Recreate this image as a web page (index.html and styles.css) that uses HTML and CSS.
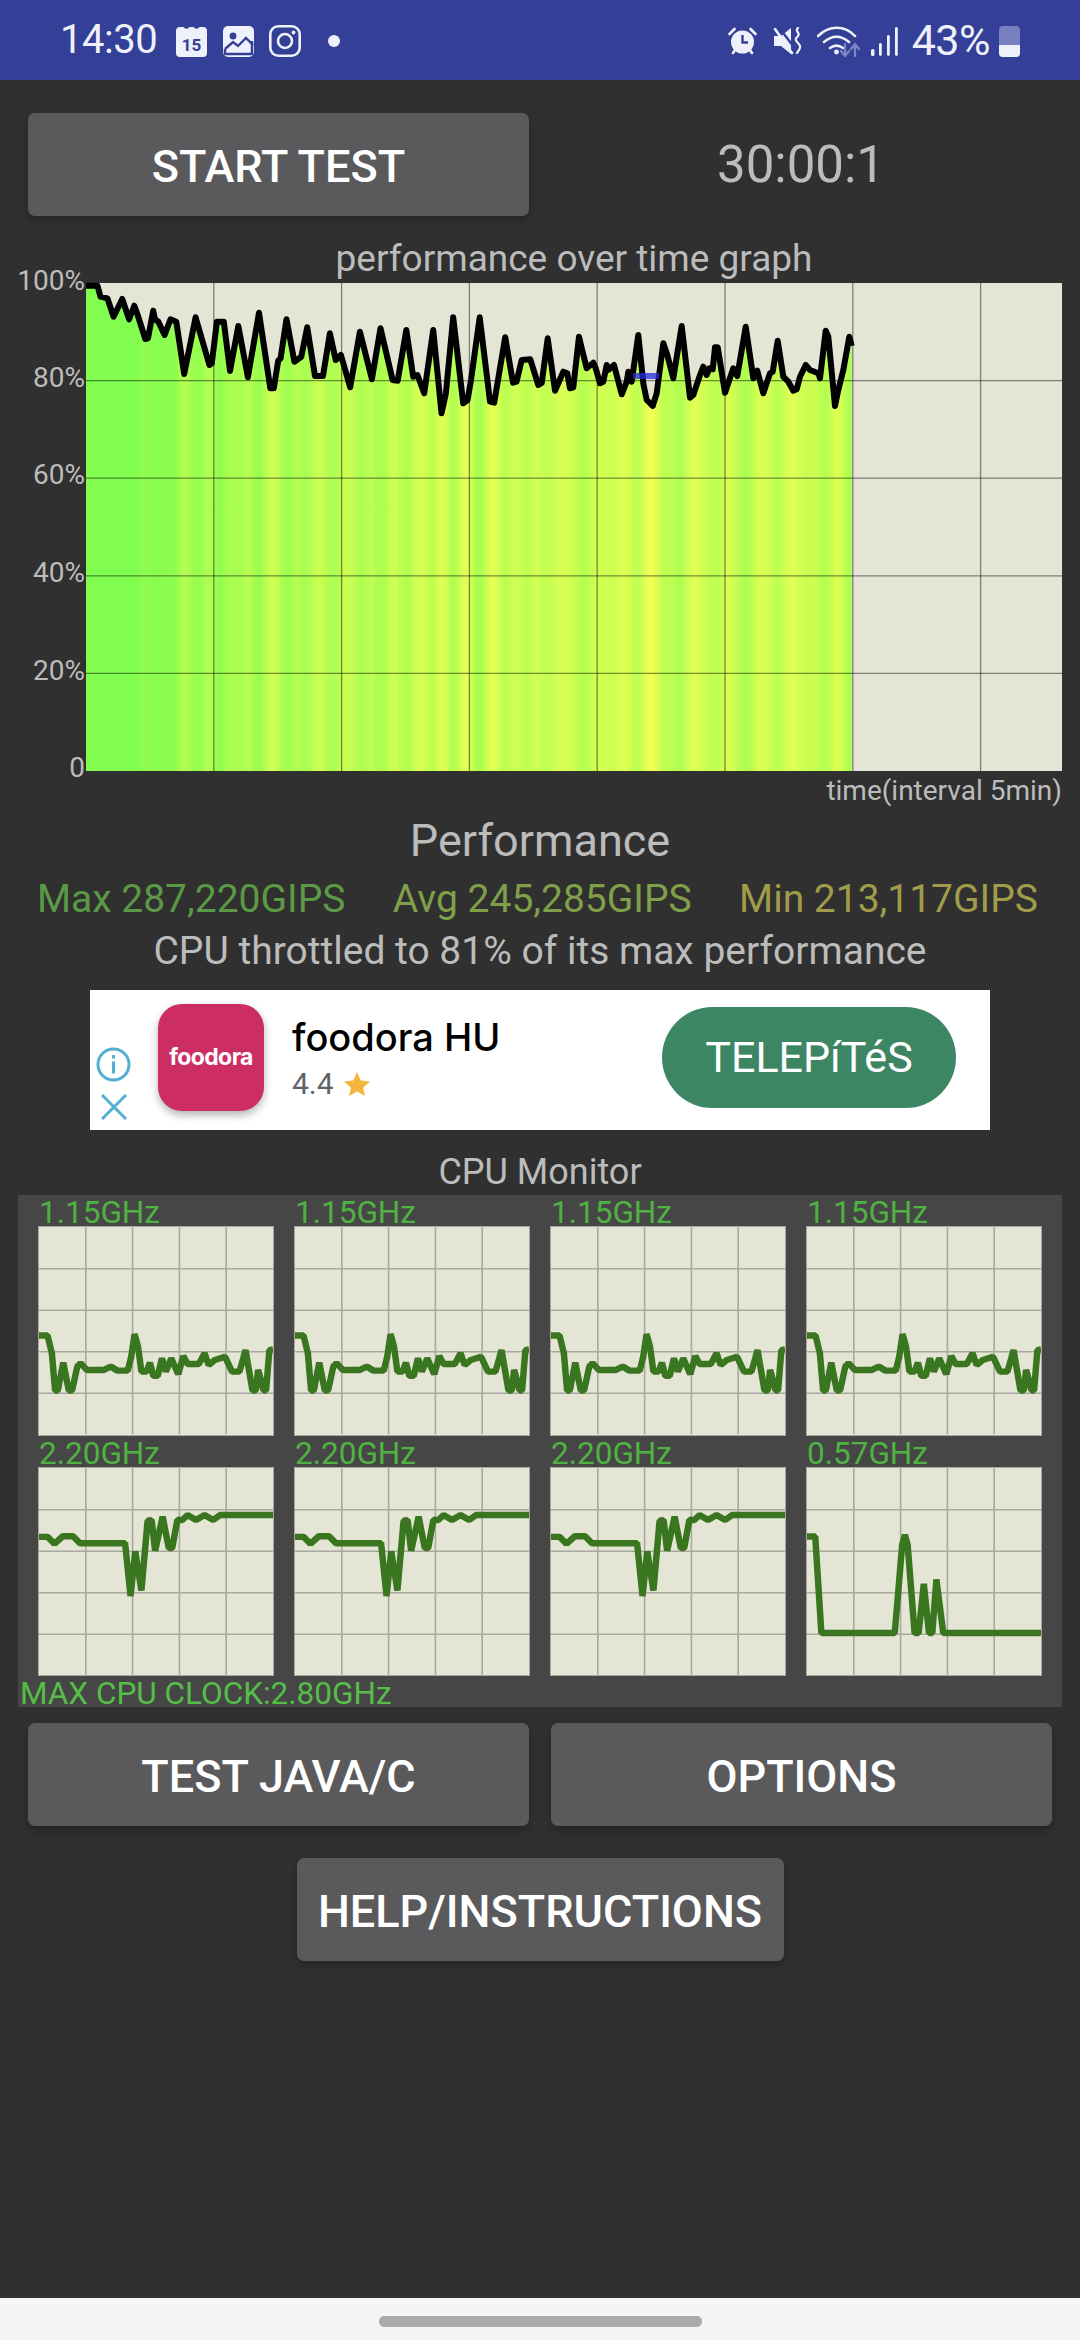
FILE: index.html
```html
<!DOCTYPE html>
<html lang="en">
<head>
<meta charset="UTF-8">
<meta name="viewport" content="width=device-width, initial-scale=1.0">
<title>CPU Throttling Test</title>
<link rel="stylesheet" href="styles.css">
</head>
<body>

<div class="status-bar">
    <span class="clock">14:30</span>
    <svg class="icon-calendar" viewBox="0 0 31 31">
        <path class="solid" d="M4 1h3.5a3.5 3.5 0 0 0 6 0h4a3.5 3.5 0 0 0 6 0H27a4 4 0 0 1 4 4v22a4 4 0 0 1-4 4H4a4 4 0 0 1-4-4V5a4 4 0 0 1 4-4z"/>
        <text class="calendar-day" x="15.5" y="25">15</text>
    </svg>
    <svg class="icon-gallery" viewBox="0 0 31 31">
        <rect class="solid" width="31" height="31" rx="5"/>
        <circle class="cut" cx="10" cy="10" r="3.4"/>
        <path class="cut-line" d="M2 23l8-7 5 4 8-8 7 7"/>
        <path class="cut-line" d="M2 23v5h27V15"/>
    </svg>
    <svg class="icon-insta" viewBox="0 0 32 32">
        <rect class="line" x="1.3" y="1.3" width="29.4" height="29.4" rx="8"/>
        <circle class="line" cx="16" cy="16" r="7"/>
        <circle class="solid" cx="24.5" cy="7.5" r="1.9"/>
    </svg>
    <span class="status-dot"></span>

    <div class="status-right">
        <svg class="icon-alarm" viewBox="0 0 29 28">
            <circle class="solid" cx="14.500" cy="15" r="11.500"/>
            <path class="cut-line thin" d="M14.500 8v7.500H20"/>
            <path class="line" d="M1.500 7l5-5M27.500 7l-5-5M5 26l2-3M24 26l-2-3"/>
        </svg>
        <svg class="icon-mute" viewBox="0 0 29 28">
            <path class="solid" d="M1 9h7l10-8v26l-10-8H1z"/>
            <path class="cut-line" d="M5-1l18 24"/>
            <path class="line" d="M2 2l17 24"/>
            <path class="line thin" d="M25 1c-4 3 3 5 0 8s-3 4 0 7 3 5-1 10"/>
        </svg>
        <svg class="icon-wifi" viewBox="0 0 44 32">
            <path class="line" d="M1 11c11-11 27-11 37 0M7 17c8-7 17-7 25 0M13 23c4-3 9-3 13 0"/>
            <circle class="solid" cx="19.500" cy="27" r="2.400"/>
            <path class="line dim" d="M28 19v12M24 26l4 5 4-5M38 31V19M34 24l4-5 4 5"/>
        </svg>
        <svg class="icon-signal" viewBox="0 0 27 29">
            <rect class="solid" y="22" width="3.500" height="7" rx="1.500"/>
            <rect class="solid" x="8" y="16" width="2.800" height="13" rx="1.400"/>
            <rect class="solid" x="16" y="8" width="2.800" height="21" rx="1.400"/>
            <rect class="solid" x="24" y="0" width="2.800" height="29" rx="1.400"/>
        </svg>
        <span class="battery-text">43%</span>
        <div class="battery"><div class="battery-level"></div></div>
    </div>
</div>

<div class="main">
    <div class="button-row top-row">
        <button type="button" class="btn">START TEST</button>
        <div class="timer">30:00:1</div>
    </div>

    <div class="graph-title">performance over time graph</div>
    <svg class="perf-chart" id="perfChart" viewBox="0 280 1080 495">
        <defs><linearGradient id="heat" gradientUnits="userSpaceOnUse" x1="86" x2="852" y1="0" y2="0"></linearGradient></defs>
        <rect class="plot-bg" x="86" y="283" width="976" height="488"/>
        <text class="axis-label" x="85" y="290">100%</text>
        <text class="axis-label" x="85" y="387">80%</text>
        <text class="axis-label" x="85" y="484">60%</text>
        <text class="axis-label" x="85" y="582">40%</text>
        <text class="axis-label" x="85" y="680">20%</text>
        <text class="axis-label" x="85" y="777">0</text>
    </svg>
    <div class="time-label">time(interval 5min)</div>

    <div class="perf-title">Performance</div>
    <div class="stats">
        <span class="stat-max">Max 287,220GIPS</span>
        <span class="stat-avg">Avg 245,285GIPS</span>
        <span class="stat-min">Min 213,117GIPS</span>
    </div>
    <div class="throttle-text">CPU throttled to 81% of its max performance</div>

    <div class="ad">
        <div class="ad-choices">
            <svg class="ad-info" viewBox="0 0 35 35">
                <circle cx="17.500" cy="17.500" r="15.500"/>
                <path d="M17.500 14.500v12M17.500 8v3.500"/>
            </svg>
            <svg class="ad-close" viewBox="0 0 26 26">
                <path d="M1 1l24 24M25 1L1 25"/>
            </svg>
        </div>
        <div class="ad-logo">foodora</div>
        <div class="ad-info-text">
            <div class="ad-name">foodora HU</div>
            <div class="ad-rating">4.4
                <svg class="ad-star" viewBox="0 0 26 24"><path d="M13 0l3.800 8.600 9.200 .9-7 6.200 2.100 8.300L13 19.500 4.900 24 7 15.700 0 9.500l9.200-.9z"/></svg>
            </div>
        </div>
        <div class="ad-button">TELEPíTéS</div>
    </div>

    <div class="monitor-title">CPU Monitor</div>
    <div class="cpu-panel">
        <div class="cpu-grid">
            <div class="cpu-cell"><div class="cpu-label">1.15GHz</div><svg class="cpu-chart" data-trace="little" viewBox="0 0 236 209"></svg></div>
            <div class="cpu-cell"><div class="cpu-label">1.15GHz</div><svg class="cpu-chart" data-trace="little" viewBox="0 0 236 209"></svg></div>
            <div class="cpu-cell"><div class="cpu-label">1.15GHz</div><svg class="cpu-chart" data-trace="little" viewBox="0 0 236 209"></svg></div>
            <div class="cpu-cell"><div class="cpu-label">1.15GHz</div><svg class="cpu-chart" data-trace="little" viewBox="0 0 236 209"></svg></div>
            <div class="cpu-cell"><div class="cpu-label">2.20GHz</div><svg class="cpu-chart" data-trace="mid" viewBox="0 0 236 209"></svg></div>
            <div class="cpu-cell"><div class="cpu-label">2.20GHz</div><svg class="cpu-chart" data-trace="mid" viewBox="0 0 236 209"></svg></div>
            <div class="cpu-cell"><div class="cpu-label">2.20GHz</div><svg class="cpu-chart" data-trace="mid" viewBox="0 0 236 209"></svg></div>
            <div class="cpu-cell"><div class="cpu-label">0.57GHz</div><svg class="cpu-chart" data-trace="big" viewBox="0 0 236 209"></svg></div>
        </div>
        <div class="cpu-label max-clock">MAX CPU CLOCK:2.80GHz</div>
    </div>

    <div class="button-row">
        <button type="button" class="btn">TEST JAVA/C</button>
        <button type="button" class="btn">OPTIONS</button>
    </div>
    <button type="button" class="btn help-btn">HELP/INSTRUCTIONS</button>
</div>

<div class="nav-bar"><div class="nav-pill"></div></div>

<script>
const SVG_NS = 'http://www.w3.org/2000/svg';

// x,y pairs read off the run, in page pixels
const perfData = [86,285.7, 97.5,285.7, 100.5,296.7, 107.4,298.3, 113.6,316.7, 122.2,299, 129.1,319.3, 134.3,305.7, 137.7,315,
    145.3,339, 148,338.3, 153.2,310.7, 155,319.3, 158.4,321.7, 164.6,335, 170.5,319.3, 176.3,321.7, 184.2,374, 195.6,317.3,
    209.4,365, 211.8,363.3, 216.9,321.7, 223.8,321.7, 230,371, 238.3,326, 247.9,377.3, 259,312.7, 270.3,388.3, 273.8,388.3,
    278.2,360.7, 280.6,358.3, 286.5,319.3, 294.4,361.7, 301.3,356.7, 307.2,327.3, 315,376, 323,376, 329.9,333.3, 335.7,360,
    340.9,355, 350.2,387.3, 359.9,331.7, 371.9,379.3, 380.5,328.3, 392.6,380, 397.7,380.7, 406.3,330, 413.2,376.7, 417.4,375,
    424.2,393.3, 433.2,330, 441.5,413.3, 445.9,393.3, 453.2,317.3, 463.2,403.3, 467.6,400, 471,380, 479.7,317.3, 490,401.7,
    494.2,402.7, 505.2,337.3, 513,382.7, 516.5,381.7, 521.7,360, 530.3,359.3, 538.3,385, 541.7,383, 547.7,338.3, 555,390.7,
    563.3,371.7, 567.3,373.3, 570,388.3, 573.3,387.3, 579,336.7, 581.7,348.3, 586.7,368.3, 593.3,362.7, 595.7,368.3, 600,383.3,
    603.3,381.7, 606.7,365, 608.3,370, 614,365, 621.7,394.3, 626.7,381.7, 628.3,371.7, 631.7,381.7, 638.3,335, 643.3,383.3,
    646.7,400, 652.7,406, 656.7,393.3, 663.3,343.3, 667.3,355, 673.3,378.3, 681.7,326, 690,397.7, 693.3,395, 700,375, 703.3,366.7,
    706.7,375, 709.3,368.3, 712.7,369.3, 715,347.3, 717.7,347.3, 725,392.7, 733.3,368.3, 737.3,376, 745.7,326.7, 753.3,378.3,
    757.3,370.7, 763.3,393.3, 770,373.3, 772.7,371.7, 777.7,340.7, 783.3,376.7, 788.3,381.7, 793.3,390.7, 796.7,389.3, 800,376.7,
    805.7,365, 810,370, 818.3,373.3, 820,378.3, 825.7,330.7, 828.3,336.7, 835,406, 838.3,390, 843.3,370, 849.3,336.7, 851.7,346];

const cpuTraces = {
    little: [0,109.3, 8.6,109.3, 13,127.3, 16.2,164.7, 19,164.7, 24.5,136.7, 30,164.7, 33.4,164.7, 38.6,140.7, 42,137.3, 48.2,144,
        65.4,144, 72.3,140.7, 79.2,144.7, 89.5,144.7, 93,130.7, 96.4,108, 99.9,120.7, 103.3,145.7, 108.5,145.7, 111.9,136.7,
        115.3,150, 119.8,150, 124,132.3, 128,145.7, 133.3,132.3, 140.5,148.3, 145.6,130, 149.8,138, 161.2,138, 167,127.3, 171.1,139,
        177.3,134, 187.6,130.7, 194.6,145.7, 202.2,145.7, 208.3,124, 215.3,164.7, 218.7,164.7, 221,144, 226.6,164.7, 229,164.7,
        232.4,124, 236,123.3],
    mid: [0,69.3, 8.6,69.3, 15.5,76.3, 24,68.7, 34.4,68.7, 41.3,75.7, 86.8,75.7, 92.3,129, 97.1,84, 103.3,123.3, 109.5,53.3, 113.6,52.3,
        117.1,83.3, 124.7,49, 130.9,80.7, 134.3,80.7, 139.5,52.3, 144.6,52.3, 149.8,47.3, 158.4,52.3, 167,47.3, 175.6,52.3, 182.5,47.3, 236,47.3],
    big: [0,69, 8.3,69, 14.5,166.3, 88.5,166.3, 96,77.3, 98.8,67.3, 101.5,77.3, 108.5,166.3, 112.6,166.3, 117.8,116.7, 123,166.3,
        126.4,166.3, 130.5,112.3, 137.4,166.3, 236,166.3]
};

function addShape(parent, tag, cls, attrs) {
    let el = document.createElementNS(SVG_NS, tag);
    el.setAttribute('class', cls);
    for (let key in attrs) {
        el.setAttribute(key, attrs[key]);
    }
    parent.appendChild(el);
    return el;
}

function toPoints(data) {
    let points = [];
    for (let i = 0; i < data.length; i += 2) {
        points.push(data[i] + ',' + data[i + 1]);
    }
    return points.join(' ');
}

function perfYAt(x) {
    for (let i = 2; i < perfData.length; i += 2) {
        if (perfData[i] >= x) {
            let t = (x - perfData[i - 2]) / (perfData[i] - perfData[i - 2]);
            return perfData[i - 1] + t * (perfData[i + 1] - perfData[i - 1]);
        }
    }
    return perfData[perfData.length - 1];
}

function drawPerfChart() {
    let chart = document.getElementById('perfChart');
    let heat = document.getElementById('heat');

    // low score = yellow, high score = green; averaged so the bands blur into each other
    for (let x = 86; x <= 852; x += 5) {
        let sum = 0;
        for (let d = -6; d <= 6; d += 2) {
            sum += perfYAt(Math.max(86, Math.min(851, x + d)));
        }
        let t = Math.max(0, Math.min(1, (sum / 7 - 318) / 85));
        let color = 'rgb(' + Math.round(128 + 122 * t) + ',' + Math.round(253 + 2 * t) + ',' + Math.round(78 + 7 * t) + ')';
        addShape(heat, 'stop', '', { offset: (x - 86) / 766, 'stop-color': color });
    }

    let last = perfData[perfData.length - 2];
    addShape(chart, 'polygon', 'perf-fill', { points: '86,771 ' + toPoints(perfData) + ' ' + last + ',771' });

    for (let k = 1; k <= 7; k++) {
        let x = 86 + k * 127.8;
        addShape(chart, 'line', 'perf-grid', { x1: x, x2: x, y1: 283, y2: 771 });
    }
    for (let k = 1; k <= 4; k++) {
        let y = 283 + k * 97.6;
        addShape(chart, 'line', 'perf-grid', { x1: 86, x2: 1062, y1: y, y2: y });
    }

    addShape(chart, 'polyline', 'perf-line', { points: toPoints(perfData) });
    addShape(chart, 'line', 'perf-avg', { x1: 633, x2: 659, y1: 376, y2: 376 });
}

function drawCpuCharts() {
    document.querySelectorAll('.cpu-chart').forEach(function (chart) {
        for (let k = 1; k <= 4; k++) {
            addShape(chart, 'line', 'cpu-gridline', { x1: k * 47.2, x2: k * 47.2, y1: 0, y2: 209 });
            addShape(chart, 'line', 'cpu-gridline', { x1: 0, x2: 236, y1: k * 41.9, y2: k * 41.9 });
        }
        addShape(chart, 'polyline', 'cpu-trace', { points: toPoints(cpuTraces[chart.dataset.trace]) });
    });
}

drawPerfChart();
drawCpuCharts();
</script>

</body>
</html>
```

FILE: styles.css
```css
* {
    box-sizing: border-box;
}

html, body {
    margin: 0;
    padding: 0;
}

body {
    width: 1080px;
    height: 2340px;
    display: flex;
    flex-direction: column;
    overflow: hidden;
    font-family: Roboto, "Liberation Sans", sans-serif;
    background-color: #303030;
    color: #bcbcbc;
}

/* status bar */
.status-bar {
    height: 80px;
    flex-shrink: 0;
    display: flex;
    align-items: center;
    padding: 0 60px 0 60px;
    background-color: #343f97;
    color: #eef0fa;
}

.clock {
    width: 116px;
    font-size: 40px;
    line-height: 80px;
    letter-spacing: -0.5px;
}

.status-bar svg {
    display: block;
    flex-shrink: 0;
}

.status-bar .solid {
    fill: #eef0fa;
}

.status-bar .line {
    fill: none;
    stroke: #eef0fa;
    stroke-width: 2.6;
    stroke-linecap: round;
}

.status-bar .thin {
    stroke-width: 2.2;
}

.status-bar .dim {
    stroke: #7d85c4;
    stroke-width: 2.2;
}

.status-bar .cut {
    fill: #343f97;
}

.status-bar .cut-line {
    fill: none;
    stroke: #343f97;
    stroke-width: 2.4;
}

.calendar-day {
    font-size: 17px;
    font-weight: 700;
    text-anchor: middle;
    fill: #343f97;
}

.icon-calendar, .icon-gallery {
    width: 31px;
    height: 31px;
    margin-top: 2px;
}

.icon-gallery {
    margin-left: 16px;
}

.icon-insta {
    width: 32px;
    height: 32px;
    margin-left: 15px;
    margin-top: 2px;
}

.status-dot {
    width: 12px;
    height: 12px;
    margin-left: 27px;
    margin-top: 2px;
    border-radius: 50%;
    background-color: #eef0fa;
}

.status-right {
    margin-left: auto;
    display: flex;
    align-items: center;
}

.icon-alarm {
    width: 29px;
    height: 28px;
    margin-top: 2px;
}

.icon-mute {
    width: 29px;
    height: 28px;
    margin-left: 16px;
    margin-top: 2px;
}

.icon-wifi {
    width: 44px;
    height: 32px;
    margin-left: 15px;
    margin-top: 2px;
}

.icon-signal {
    width: 27px;
    height: 29px;
    margin-left: 10px;
    margin-top: 2px;
}

.battery-text {
    margin-left: 14px;
    font-size: 43px;
    letter-spacing: -0.5px;
}

.battery {
    position: relative;
    width: 21px;
    height: 31px;
    margin-left: 9px;
    margin-top: 2px;
    border-radius: 4px;
    background-color: #7880c0;
    overflow: hidden;
}

.battery-level {
    position: absolute;
    left: 0;
    right: 0;
    bottom: 0;
    height: 12px;
    background-color: #eef0fa;
}

/* page body */
.main {
    flex: 1;
    display: flex;
    flex-direction: column;
}

.button-row {
    display: grid;
    grid-template-columns: 501px 501px;
    gap: 22px;
    padding: 0 28px;
    margin-top: 16px;
}

.top-row {
    margin-top: 33px;
}

.btn {
    height: 103px;
    padding: 4px 0 0;
    border: none;
    border-radius: 7px;
    background-color: #5a5a5c;
    color: #fff;
    font-family: inherit;
    font-size: 45px;
    font-weight: 500;
    box-shadow: 0 5px 8px rgba(0, 0, 0, 0.22);
    cursor: pointer;
}

.help-btn {
    width: 487px;
    margin: 32px auto 0;
}

.timer {
    padding-right: 1px;
    font-size: 51px;
    line-height: 103px;
    text-align: center;
}

.graph-title {
    margin-top: 22px;
    padding: 0 18px 0 86px;
    font-size: 37px;
    line-height: 42px;
    text-align: center;
}

/* performance chart */
.perf-chart {
    display: block;
    width: 1080px;
    height: 495px;
    flex-shrink: 0;
    overflow: visible;
}

.plot-bg {
    fill: #e4e5d5;
}

.axis-label {
    font-size: 28px;
    text-anchor: end;
    fill: #bcbcbc;
}

.perf-fill {
    fill: url(#heat);
}

.perf-grid {
    stroke: rgba(0, 0, 0, 0.45);
    stroke-width: 1.3;
}

.perf-line {
    fill: none;
    stroke: #000;
    stroke-width: 6;
    stroke-linejoin: round;
}

.perf-avg {
    stroke: rgba(40, 40, 230, 0.75);
    stroke-width: 6;
}

.time-label {
    padding-right: 18px;
    font-size: 28px;
    line-height: 32px;
    text-align: right;
}

.perf-title {
    margin-top: 9px;
    font-size: 45px;
    line-height: 50px;
    text-align: center;
}

.stats {
    display: flex;
    justify-content: space-between;
    margin-top: 12px;
    padding: 0 42px 0 37px;
    font-size: 39px;
    line-height: 42px;
}

.stat-max {
    color: #5b9a45;
}

.stat-avg {
    color: #7f9f48;
}

.stat-min {
    color: #a09c4a;
}

.throttle-text {
    margin-top: 10px;
    font-size: 39px;
    line-height: 42px;
    text-align: center;
}

/* ad banner */
.ad {
    width: 900px;
    height: 140px;
    margin: 18px auto 0;
    flex-shrink: 0;
    display: flex;
    align-items: center;
    padding: 0 34px 5px 6px;
    background-color: #fff;
}

.ad-choices {
    width: 35px;
    align-self: flex-end;
    display: flex;
    flex-direction: column;
    align-items: center;
    gap: 12px;
    margin-bottom: 5px;
}

.ad-choices svg {
    display: block;
    fill: none;
    stroke: #55afd0;
    stroke-width: 3;
}

.ad-info {
    width: 35px;
    height: 35px;
}

.ad-close {
    width: 26px;
    height: 26px;
}

.ad-logo {
    width: 106px;
    height: 107px;
    margin-left: 27px;
    flex-shrink: 0;
    border-radius: 24px;
    background-color: #cc2e64;
    box-shadow: 0 4px 8px rgba(0, 0, 0, 0.3);
    color: #fff;
    font-family: Inter, sans-serif;
    font-size: 23px;
    font-weight: 700;
    letter-spacing: -0.6px;
    line-height: 107px;
    text-align: center;
}

.ad-info-text {
    flex: 1;
    margin-left: 28px;
}

.ad-name {
    font-family: Inter, sans-serif;
    font-size: 38px;
    font-weight: 500;
    line-height: 46px;
    color: #000;
}

.ad-rating {
    display: flex;
    align-items: center;
    gap: 10px;
    margin-top: 6px;
    font-size: 30px;
    line-height: 36px;
    color: #5f6368;
}

.ad-star {
    width: 26px;
    height: 24px;
    fill: #f3b53c;
}

.ad-button {
    width: 294px;
    height: 101px;
    border-radius: 51px;
    background-color: #3d8664;
    color: #fff;
    font-size: 43px;
    line-height: 101px;
    text-align: center;
}

/* cpu monitor */
.monitor-title {
    margin-top: 22px;
    font-size: 36px;
    line-height: 40px;
    text-align: center;
}

.cpu-panel {
    height: 512px;
    margin: 3px 18px 0;
    flex-shrink: 0;
    background-color: #464646;
}

.cpu-grid {
    display: grid;
    grid-template-columns: repeat(4, 236px);
    column-gap: 20px;
    padding-left: 20px;
}

.cpu-label {
    height: 31px;
    padding-left: 1px;
    font-size: 31.5px;
    line-height: 35px;
    color: #4fb342;
    white-space: nowrap;
}

.max-clock {
    padding-left: 2px;
    color: #55bd48;
}

.cpu-chart {
    display: block;
    width: 236px;
    height: 209.5px;
    background-color: #e4e5d5;
    border: 1px solid #a8a8a0;
}

.cpu-gridline {
    stroke: #a8a8a0;
    stroke-width: 1.6;
}

.cpu-trace {
    fill: none;
    stroke: #3a7520;
    stroke-width: 6.5;
    stroke-linejoin: bevel;
}

/* nav bar */
.nav-bar {
    height: 42px;
    flex-shrink: 0;
    display: flex;
    justify-content: center;
    align-items: center;
    padding-top: 5px;
    background-color: #f5f5f8;
}

.nav-pill {
    width: 323px;
    height: 11px;
    border-radius: 5px;
    background-color: #aaa;
}
```
